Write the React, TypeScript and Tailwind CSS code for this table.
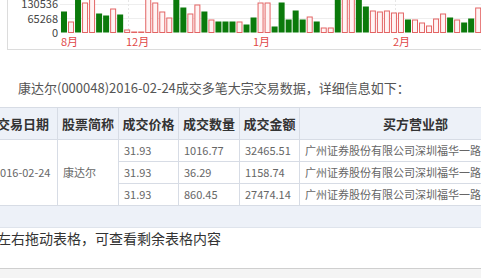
const font = { fontFamily: '"Noto Sans CJK SC", "Liberation Sans", sans-serif' };

// volume bars, heights in px above the baseline; up = red hollow, down = green
const bars: [number, "up" | "down"][] = [
  [21, "down"], [11, "up"], [36, "down"], [30, "up"], [34, "up"], [19, "down"],
  [17, "down"], [24, "up"], [18, "down"], [3, "up"], [1, "up"], [1, "up"],
  [34, "up"], [30, "up"], [21, "up"], [15, "up"], [36, "down"], [25, "down"],
  [19, "up"], [28, "up"], [21, "down"], [13, "up"], [11, "down"], [11, "down"],
  [11, "down"], [11, "up"], [8, "down"], [15, "down"], [30, "up"], [30, "up"],
  [6, "down"], [30, "down"], [13, "down"], [22, "down"], [13, "down"], [16, "up"],
  [11, "down"], [5, "up"], [5, "up"], [36, "down"], [36, "up"], [36, "up"],
  [36, "down"], [26, "down"], [22, "up"], [21, "up"], [22, "up"], [20, "up"],
  [20, "up"], [13, "down"], [13, "up"], [10, "up"], [7, "up"], [14, "up"],
  [19, "up"], [15, "down"], [13, "up"], [10, "down"], [14, "down"], [25, "up"],
];

const months: [string, number][] = [
  ["8月", 60],
  ["12月", 125],
  ["1月", 252],
  ["2月", 392],
];

const rows = [
  { price: "31.93", qty: "1016.77", amount: "32465.51" },
  { price: "31.93", qty: "36.29", amount: "1158.74" },
  { price: "31.93", qty: "860.45", amount: "27474.14" },
];

const broker = "广州证券股份有限公司深圳福华一路证券营业部";

function VolumeChart() {
  const base = 32.5;
  return (
    <div className="ml-[7px] h-[50px] border-b border-l border-[#dcdcdc]">
      <svg width="474" height="49" viewBox="7 0 474 49" className="block">
        <line x1="59" x2="481" y1="4.5" y2="4.5" stroke="#eeeeee" />
        <line x1="59" x2="481" y1="18.5" y2="18.5" stroke="#eeeeee" />
        {[127, 258, 394].map((x) => (
          <line key={x} x1={x + 0.5} x2={x + 0.5} y1="0" y2={base} stroke="#e6e6e6" strokeDasharray="2 2" />
        ))}
        {bars.map(([h, dir], i) => {
          const x = 60 + i * 7.02;
          return dir === "up" ? (
            <rect key={i} x={x + 0.5} y={base - h + 0.5} width="5" height={h - 0.5} fill="#fff4f4" stroke="#e36464" />
          ) : (
            <rect key={i} x={x} y={base - h} width="6" height={h} fill="#0b7a0b" />
          );
        })}
        <g fontSize="11" fill="#444" textAnchor="end" style={font}>
          <text x="57" y="8">130536</text>
          <text x="57" y="22.5">65268</text>
          <text x="57" y="37">0</text>
        </g>
        <g fontSize="11" fill="#e04848" style={font}>
          {months.map(([m, x]) => (
            <text key={m} x={x} y="46">{m}</text>
          ))}
        </g>
      </svg>
    </div>
  );
}

export default function App() {
  return (
    <div className="w-[481px] h-[278px] overflow-hidden bg-white" style={font}>
      <VolumeChart />

      <p className="mt-[28px] pl-[18px] text-[13px] leading-5 text-[#555]">
        康达尔(000048)2016-02-24成交多笔大宗交易数据，详细信息如下：
      </p>

      <div className="mt-[9px] overflow-hidden">
        <table className="ml-[-12px] w-[543px] table-fixed border-collapse">
          <colgroup>
            <col className="w-[69px]" />
            <col className="w-[61px]" />
            <col className="w-[60px]" />
            <col className="w-[61px]" />
            <col className="w-[60px]" />
            <col className="w-[232px]" />
          </colgroup>
          <thead>
            <tr className="h-[32px] bg-[#edf1f8] text-[13px] font-bold text-[#333]">
              <th className="border border-[#d7dce5] font-bold">交易日期</th>
              <th className="border border-[#d7dce5] font-bold">股票简称</th>
              <th className="border border-[#d7dce5] font-bold">成交价格</th>
              <th className="border border-[#d7dce5] font-bold">成交数量</th>
              <th className="border border-[#d7dce5] font-bold">成交金额</th>
              <th className="border border-[#d7dce5] font-bold">买方营业部</th>
            </tr>
          </thead>
          <tbody className="text-[11px] text-[#666]">
            {rows.map((r, i) => (
              <tr key={i} className="h-[22px]">
                {i === 0 && (
                  <>
                    <td rowSpan={3} className="border border-[#d7dce5] pl-[5px]">2016-02-24</td>
                    <td rowSpan={3} className="border border-[#d7dce5] pl-[5px]">康达尔</td>
                  </>
                )}
                <td className="border border-[#d7dce5] pl-[5px]">{r.price}</td>
                <td className="border border-[#d7dce5] pl-[5px]">{r.qty}</td>
                <td className="border border-[#d7dce5] pl-[5px]">{r.amount}</td>
                <td className="whitespace-nowrap overflow-hidden border border-[#d7dce5] pl-[5px]">{broker}</td>
              </tr>
            ))}
          </tbody>
        </table>
      </div>

      <div className="h-[22px] border-b border-[#dfe4ec] bg-[#edf1f8]" />

      <div className="h-[40px]">
        <p className="ml-[-3px] text-[14px] leading-5 text-[#333]">左右拖动表格，可查看剩余表格内容</p>
      </div>

      <div className="h-[10px] border-t border-[#cfcfcf] bg-[#f4f4f4]" />
    </div>
  );
}
